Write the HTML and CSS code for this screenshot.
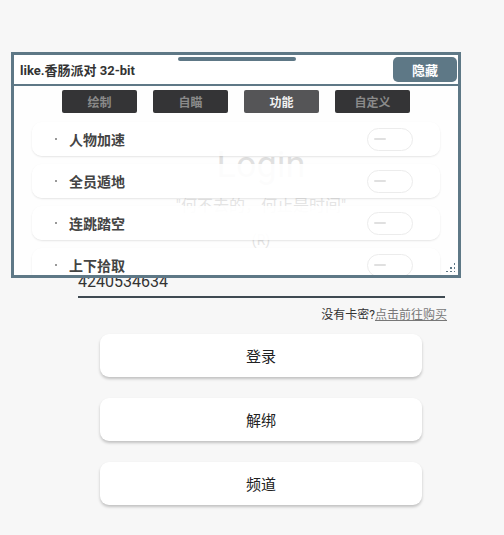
FILE: index.html
```html
<!DOCTYPE html>
<html lang="zh-CN">
<head>
  <meta charset="UTF-8" />
  <title>Login</title>
  <link rel="stylesheet" href="styles.css">
</head>
<body>
  <div class="page">
    <h1 class="login-title">Login</h1>
    <p class="quote">"何不去的，何止是时间"</p>
    <p class="mark">(R)</p>
    <div class="field">4240534634</div>
    <p class="buy">没有卡密?<a href="#">点击前往购买</a></p>
    <button class="btn">登录</button>
    <button class="btn">解绑</button>
    <button class="btn">频道</button>
  </div>

  <div class="menu">
    <div class="menu-head">
      <span class="menu-title">like.香肠派对 32-bit</span>
      <span class="handle"></span>
      <button class="hide-btn">隐藏</button>
    </div>
    <div class="menu-body">
      <div class="tabs">
        <span class="tab">绘制</span>
        <span class="tab">自瞄</span>
        <span class="tab active">功能</span>
        <span class="tab">自定义</span>
      </div>
      <div class="list">
        <div class="row"><span class="label"><i class="dot"></i>人物加速</span><span class="toggle"></span></div>
        <div class="row"><span class="label"><i class="dot"></i>全员遁地</span><span class="toggle"></span></div>
        <div class="row"><span class="label"><i class="dot"></i>连跳踏空</span><span class="toggle"></span></div>
        <div class="row"><span class="label"><i class="dot"></i>上下拾取</span><span class="toggle"></span></div>
      </div>
    </div>
    <span class="grip"></span>
  </div>
</body>
</html>
```

FILE: styles.css
```css
body {
  margin: 0;
  background: #f7f7f7;
  font-family: Roboto, "Noto Sans CJK SC", sans-serif;
  width: 504px;
  height: 535px;
  overflow: hidden;
}
.page {
  display: flex;
  flex-direction: column;
  align-items: center;
  padding: 144px 0 0 18px;
}
.login-title {
  margin: 0;
  font-size: 36px;
  line-height: 42px;
  font-weight: 400;
  color: #666;
}
.quote {
  margin: 10px 0 0;
  font-size: 16px;
  line-height: 20px;
  color: #777;
}
.mark {
  margin: 14px 0 0;
  font-size: 14px;
  line-height: 20px;
  color: #777;
}
.field {
  align-self: stretch;
  margin: 22px 59px 0 60px;
  font-size: 16px;
  line-height: 20px;
  color: #333;
  padding-bottom: 4px;
  border-bottom: 2px solid #3f4a52;
}
.buy {
  align-self: stretch;
  text-align: right;
  margin: 8px 57px 0 0;
  font-size: 12px;
  line-height: 18px;
  color: #333;
}
.buy a {
  color: #777;
}
.btn {
  width: 322px;
  height: 43px;
  margin-top: 10px;
  border: none;
  border-radius: 9px;
  background: #fff;
  box-shadow: 0 2px 3px rgba(0, 0, 0, 0.22);
  font-family: "Noto Sans CJK SC", sans-serif;
  font-size: 15px;
  color: #222;
}
.btn + .btn {
  margin-top: 21px;
}

/* floating menu */
.menu {
  position: absolute;
  left: 11px;
  top: 52px;
  width: 444px;
  height: 220px;
  border: 3px solid #5e7886;
  display: flex;
  flex-direction: column;
  overflow: hidden;
}
.menu-head {
  position: relative;
  height: 29px;
  background: #fff;
  border-bottom: 2px solid #5e7886;
  display: flex;
  align-items: center;
  justify-content: space-between;
  padding: 0 1px 0 6px;
}
.menu-title {
  font-family: Roboto, "Noto Sans CJK SC", sans-serif;
  font-weight: 700;
  font-size: 13px;
  color: #333;
}
.handle {
  position: absolute;
  left: 164px;
  top: 2px;
  width: 118px;
  height: 4px;
  border-radius: 2px;
  background: #5e7886;
}
.hide-btn {
  width: 64px;
  height: 25px;
  border: none;
  border-radius: 5px;
  background: #5e7886;
  color: #fff;
  font-family: "Noto Sans CJK SC", sans-serif;
  font-weight: 700;
  font-size: 13px;
}
.menu-body {
  flex: 1;
  background: rgba(255, 255, 255, 0.8);
  padding: 4px 18px 0;
  overflow: hidden;
}
.tabs {
  display: flex;
  justify-content: center;
  gap: 16px;
}
.tab {
  width: 75px;
  height: 23px;
  line-height: 23px;
  text-align: center;
  background: #343436;
  color: #8a8a8a;
  font-family: "Noto Sans CJK SC", sans-serif;
  font-weight: 700;
  font-size: 12px;
  border-radius: 2px;
}
.tab.active {
  background: #555557;
  color: #f2f2f2;
}
.list {
  display: flex;
  flex-direction: column;
  gap: 8px;
  margin-top: 9px;
}
.row {
  height: 34px;
  flex-shrink: 0;
  display: flex;
  align-items: center;
  justify-content: space-between;
  padding: 0 27px 0 22px;
  background: rgba(255, 255, 255, 0.9);
  border-radius: 10px;
  box-shadow: 0 1px 2px rgba(0, 0, 0, 0.1);
}
.label {
  display: flex;
  align-items: center;
  font-family: "Noto Sans CJK SC", sans-serif;
  font-weight: 700;
  font-size: 14px;
  color: #444;
}
.dot {
  width: 2px;
  height: 2px;
  border-radius: 1px;
  background: #777;
  margin: 0 12px 0 1px;
}
.toggle {
  position: relative;
  width: 44px;
  height: 21px;
  border: 1px solid #ececec;
  border-radius: 12px;
}
.toggle::before {
  content: "";
  position: absolute;
  left: 6px;
  top: 9px;
  width: 12px;
  height: 2px;
  border-radius: 1px;
  background: #e0e0e0;
}
.grip {
  position: absolute;
  right: 3px;
  bottom: 3px;
  width: 10px;
  height: 10px;
  background:
    radial-gradient(circle, #5e7886 1px, transparent 1.3px) 0 0 / 4px 4px;
  clip-path: polygon(100% 0, 100% 100%, 0 100%);
}
```
